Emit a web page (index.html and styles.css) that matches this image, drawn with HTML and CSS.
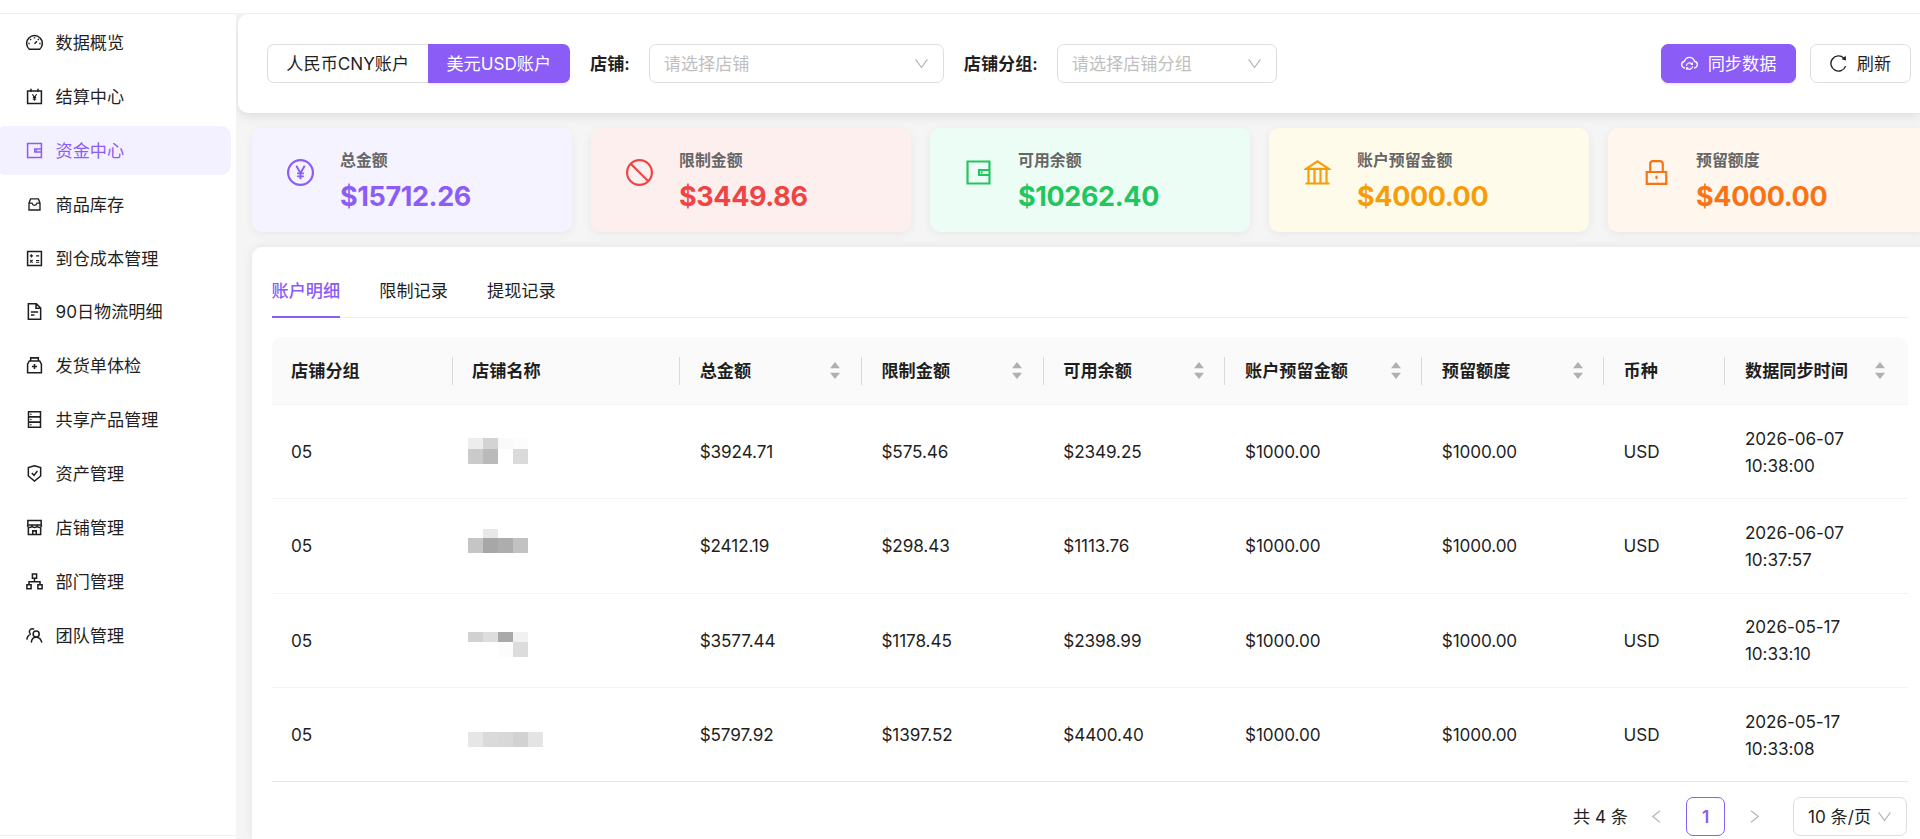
FILE: index.html
```html
<!DOCTYPE html>
<html lang="zh-CN">
<head>
  <meta charset="UTF-8">
  <meta name="viewport" content="width=device-width, initial-scale=1.0">
  <title>资金中心</title>
  <link rel="stylesheet" href="styles.css">
</head>
<body>
  <!-- 图标 -->
  <svg class="icon-defs" width="0" height="0">
    <symbol id="i-dashboard" viewBox="64 64 896 896">
      <path d="M238 868A412 412 0 1 1 786 868Z"/>
      <path d="M512 230v70M190 560h70M764 560h70M284 332l48 48M740 332l-48 48M512 580l130-130"/>
    </symbol>
    <symbol id="i-account" viewBox="64 64 896 896">
      <path d="M148 220h728v656H148zM326 110v170M698 110v170"/>
      <path d="M404 390l108 180 108-180M512 560v170M424 570h176M424 655h176" stroke-width="60"/>
    </symbol>
    <symbol id="i-wallet" viewBox="64 64 896 896">
      <path d="M148 148h728v728H148zM876 428H528v168h348"/>
      <circle class="solid" cx="620" cy="512" r="38"/>
    </symbol>
    <symbol id="i-inbox" viewBox="64 64 896 896">
      <path d="M184 840V420l96-240h464l96 240v420zM184 430h176q40 130 152 130t152-130h176"/>
    </symbol>
    <symbol id="i-calc" viewBox="64 64 896 896">
      <path d="M148 148h728v728H148z"/>
      <path d="M266 370h170M351 285v170M590 370h170M285 590l130 140M415 590L285 730M590 615h170M590 710h170" stroke-width="60"/>
    </symbol>
    <symbol id="i-file" viewBox="64 64 896 896">
      <path d="M188 100h420l228 228v596H188zM590 110v236h236M320 540h384M320 700h190"/>
    </symbol>
    <symbol id="i-medicine" viewBox="64 64 896 896">
      <path d="M310 260V110h404v150M148 890V440l90-170h548l90 170v450zM512 430v270M377 565h270"/>
    </symbol>
    <symbol id="i-database" viewBox="64 64 896 896">
      <path d="M196 100h632v824H196zM196 374h632M196 650h632"/>
      <circle class="solid" cx="320" cy="237" r="40"/>
      <circle class="solid" cx="320" cy="512" r="40"/>
      <circle class="solid" cx="320" cy="787" r="40"/>
    </symbol>
    <symbol id="i-safety" viewBox="64 64 896 896">
      <path d="M512 102l324 100v440L512 910 188 642V202zM370 490l115 120 180-230"/>
    </symbol>
    <symbol id="i-shop" viewBox="64 64 896 896">
      <path d="M160 148h704v230H160zM188 520v356h648V520M420 876V690h184v186"/>
      <path d="M148 378v60q20 80 110 80t120-80q30 80 134 80t134-80q30 80 120 80t110-80v-60"/>
    </symbol>
    <symbol id="i-apartment" viewBox="64 64 896 896">
      <path d="M402 120h220v220H402zM112 688h220v200H112zM692 688h220v200H692zM512 340v180M222 688V520h580v168"/>
    </symbol>
    <symbol id="i-team" viewBox="64 64 896 896">
      <circle cx="600" cy="430" r="160"/>
      <path d="M342 890q20-290 258-290t298 290M490 190a150 150 0 1 0-190 240M110 730q10-210 210-290"/>
    </symbol>
    <symbol id="i-pay" viewBox="64 64 896 896">
      <circle cx="512" cy="512" r="412"/>
      <path d="M372 290l140 240 140-240M512 520v220M400 540h224M400 640h224" stroke-width="62"/>
    </symbol>
    <symbol id="i-stop" viewBox="64 64 896 896">
      <circle cx="512" cy="512" r="412"/>
      <path d="M221 221l582 582"/>
    </symbol>
    <symbol id="i-bank" viewBox="64 64 896 896">
      <path d="M130 394L512 140l382 254zM212 394v450M412 394v450M612 394v450M812 394v450M112 876h800"/>
    </symbol>
    <symbol id="i-lock" viewBox="64 64 896 896">
      <path d="M188 496h648v392H188zM304 496V220q0-88 88-88h240q88 0 88 88v276M512 620v110"/>
    </symbol>
    <symbol id="i-cloud" viewBox="64 64 896 896">
      <path d="M280 756C170 740 100 660 100 570c0-90 62-160 146-178C290 270 390 190 512 190s222 80 266 202c84 18 146 88 146 178 0 90-70 170-180 186"/>
      <path d="M350 640a166 166 0 0 1 300-90M674 660a166 166 0 0 1-300 90M665 460v100h-90M359 840V740h90" stroke-width="62"/>
    </symbol>
    <symbol id="i-reload" viewBox="64 64 896 896">
      <path d="M795 229A400 400 0 1 0 888 650"/>
      <path class="solid" d="M890 110l20 240-236-60z"/>
    </symbol>
    <symbol id="i-down" viewBox="64 64 896 896"><path d="M160 270l352 480 352-480"/></symbol>
    <symbol id="i-left" viewBox="64 64 896 896"><path d="M720 170L290 512l430 342"/></symbol>
    <symbol id="i-right" viewBox="64 64 896 896"><path d="M304 170l430 342-430 342"/></symbol>
    <symbol id="i-sort" viewBox="0 0 10 17"><path class="solid" d="M5 0l5 6.3H0zM5 17l5-6.3H0z"/></symbol>
  </svg>

  <header class="topbar"></header>

  <div class="layout">
    <aside class="sidebar">
      <nav class="menu">
        <a class="menu-item"><svg class="icon"><use href="#i-dashboard"/></svg>数据概览</a>
        <a class="menu-item"><svg class="icon"><use href="#i-account"/></svg>结算中心</a>
        <a class="menu-item active"><svg class="icon"><use href="#i-wallet"/></svg>资金中心</a>
        <a class="menu-item"><svg class="icon icon-small"><use href="#i-inbox"/></svg>商品库存</a>
        <a class="menu-item"><svg class="icon"><use href="#i-calc"/></svg>到仓成本管理</a>
        <a class="menu-item"><svg class="icon"><use href="#i-file"/></svg>90日物流明细</a>
        <a class="menu-item"><svg class="icon"><use href="#i-medicine"/></svg>发货单体检</a>
        <a class="menu-item"><svg class="icon"><use href="#i-database"/></svg>共享产品管理</a>
        <a class="menu-item"><svg class="icon"><use href="#i-safety"/></svg>资产管理</a>
        <a class="menu-item"><svg class="icon"><use href="#i-shop"/></svg>店铺管理</a>
        <a class="menu-item"><svg class="icon"><use href="#i-apartment"/></svg>部门管理</a>
        <a class="menu-item"><svg class="icon"><use href="#i-team"/></svg>团队管理</a>
      </nav>
      <div class="sidebar-footer"></div>
    </aside>

    <main class="main">
      <section class="toolbar">
        <div class="account-switch">
          <button class="switch-btn">人民币CNY账户</button>
          <button class="switch-btn selected">美元USD账户</button>
        </div>
        <span class="field-label">店铺:</span>
        <div class="select select-shop"><span>请选择店铺</span><svg class="arrow"><use href="#i-down"/></svg></div>
        <span class="field-label">店铺分组:</span>
        <div class="select select-group"><span>请选择店铺分组</span><svg class="arrow"><use href="#i-down"/></svg></div>
        <div class="actions">
          <button class="btn btn-primary"><svg class="icon"><use href="#i-cloud"/></svg>同步数据</button>
          <button class="btn"><svg class="icon"><use href="#i-reload"/></svg>刷新</button>
        </div>
      </section>

      <section class="stats">
        <div class="stat purple">
          <svg class="stat-icon"><use href="#i-pay"/></svg>
          <div><div class="stat-title">总金额</div><div class="stat-value">$15712.26</div></div>
        </div>
        <div class="stat red">
          <svg class="stat-icon"><use href="#i-stop"/></svg>
          <div><div class="stat-title">限制金额</div><div class="stat-value">$3449.86</div></div>
        </div>
        <div class="stat green">
          <svg class="stat-icon"><use href="#i-wallet"/></svg>
          <div><div class="stat-title">可用余额</div><div class="stat-value">$10262.40</div></div>
        </div>
        <div class="stat yellow">
          <svg class="stat-icon"><use href="#i-bank"/></svg>
          <div><div class="stat-title">账户预留金额</div><div class="stat-value">$4000.00</div></div>
        </div>
        <div class="stat orange">
          <svg class="stat-icon"><use href="#i-lock"/></svg>
          <div><div class="stat-title">预留额度</div><div class="stat-value">$4000.00</div></div>
        </div>
      </section>

      <section class="panel">
        <div class="tabs">
          <div class="tab active">账户明细</div>
          <div class="tab">限制记录</div>
          <div class="tab">提现记录</div>
        </div>

        <table class="table">
          <colgroup>
            <col class="col-group"><col class="col-name"><col class="col-money"><col class="col-money"><col class="col-money">
            <col class="col-reserve"><col class="col-money"><col class="col-currency"><col class="col-time">
          </colgroup>
          <thead>
            <tr>
              <th><div class="th">店铺分组</div></th>
              <th><div class="th">店铺名称</div></th>
              <th><div class="th">总金额<svg class="sort"><use href="#i-sort"/></svg></div></th>
              <th><div class="th">限制金额<svg class="sort"><use href="#i-sort"/></svg></div></th>
              <th><div class="th">可用余额<svg class="sort"><use href="#i-sort"/></svg></div></th>
              <th><div class="th">账户预留金额<svg class="sort"><use href="#i-sort"/></svg></div></th>
              <th><div class="th">预留额度<svg class="sort"><use href="#i-sort"/></svg></div></th>
              <th><div class="th">币种</div></th>
              <th><div class="th">数据同步时间<svg class="sort"><use href="#i-sort"/></svg></div></th>
            </tr>
          </thead>
          <tbody>
            <tr>
              <td>05</td>
              <td>
                <svg class="mosaic" width="75" height="40" shape-rendering="crispEdges">
                  <rect x="0" y="6" width="15" height="11" fill="#ededed"/><rect x="15" y="6" width="15" height="11" fill="#d3d3d3"/>
                  <rect x="30" y="6" width="15" height="11" fill="#fafafa"/><rect x="45" y="6" width="15" height="11" fill="#fcfcfc"/>
                  <rect x="0" y="17" width="15" height="15" fill="#cacaca"/><rect x="15" y="17" width="15" height="15" fill="#bababa"/>
                  <rect x="45" y="17" width="15" height="15" fill="#dadada"/>
                </svg>
              </td>
              <td>$3924.71</td><td>$575.46</td><td>$2349.25</td><td>$1000.00</td><td>$1000.00</td><td>USD</td>
              <td>2026-06-07<br>10:38:00</td>
            </tr>
            <tr>
              <td>05</td>
              <td>
                <svg class="mosaic" width="75" height="40" shape-rendering="crispEdges">
                  <rect x="15" y="3" width="15" height="9" fill="#e8e8e8"/>
                  <rect x="0" y="12" width="15" height="15" fill="#c5c5c5"/><rect x="15" y="12" width="15" height="15" fill="#a7a7a7"/>
                  <rect x="30" y="12" width="15" height="15" fill="#adadad"/><rect x="45" y="12" width="15" height="15" fill="#c2c2c2"/>
                </svg>
              </td>
              <td>$2412.19</td><td>$298.43</td><td>$1113.76</td><td>$1000.00</td><td>$1000.00</td><td>USD</td>
              <td>2026-06-07<br>10:37:57</td>
            </tr>
            <tr>
              <td>05</td>
              <td>
                <svg class="mosaic" width="75" height="40" shape-rendering="crispEdges">
                  <rect x="0" y="12" width="15" height="10" fill="#d1d1d1"/><rect x="15" y="12" width="15" height="10" fill="#dddedc"/>
                  <rect x="30" y="12" width="15" height="10" fill="#a9a9a9"/><rect x="45" y="12" width="15" height="10" fill="#f1f1f1"/>
                  <rect x="30" y="22" width="15" height="15" fill="#fcfcfc"/><rect x="45" y="22" width="15" height="15" fill="#dcdcdc"/>
                </svg>
              </td>
              <td>$3577.44</td><td>$1178.45</td><td>$2398.99</td><td>$1000.00</td><td>$1000.00</td><td>USD</td>
              <td>2026-05-17<br>10:33:10</td>
            </tr>
            <tr>
              <td>05</td>
              <td>
                <svg class="mosaic" width="75" height="40" shape-rendering="crispEdges">
                  <rect x="0" y="17" width="15" height="15" fill="#e6e6e6"/><rect x="15" y="17" width="15" height="15" fill="#dadada"/>
                  <rect x="30" y="17" width="15" height="15" fill="#d8d8d8"/><rect x="45" y="17" width="15" height="15" fill="#d2d2d2"/>
                  <rect x="60" y="17" width="15" height="15" fill="#e4e4e4"/>
                </svg>
              </td>
              <td>$5797.92</td><td>$1397.52</td><td>$4400.40</td><td>$1000.00</td><td>$1000.00</td><td>USD</td>
              <td>2026-05-17<br>10:33:08</td>
            </tr>
          </tbody>
        </table>

        <div class="pagination">
          <span class="total">共 4 条</span>
          <span class="page-nav"><svg class="nav-icon"><use href="#i-left"/></svg></span>
          <span class="page current">1</span>
          <span class="page-nav"><svg class="nav-icon"><use href="#i-right"/></svg></span>
          <div class="select page-size"><span>10 条/页</span><svg class="arrow"><use href="#i-down"/></svg></div>
        </div>
      </section>
    </main>
  </div>
</body>
</html>
```
FILE: styles.css
```css
* {
  margin: 0;
  padding: 0;
  box-sizing: border-box;
}

body {
  font-family: Inter, 'Noto Sans CJK SC', sans-serif;
  font-size: 17.15px;
  line-height: 27px;
  color: #1f1f1f;
  background: #fff;
  height: 100vh;
  overflow: hidden;
  display: flex;
  flex-direction: column;
}

button {
  font: inherit;
  color: inherit;
  background: #fff;
}

svg {
  fill: none;
  stroke: currentColor;
  stroke-width: 72;
  flex: none;
}

.solid {
  fill: currentColor;
  stroke: none;
}

.icon-defs {
  position: absolute;
}

.icon {
  width: 17px;
  height: 17px;
}

.topbar {
  height: 14px;
  border-bottom: 1px solid #f0f0f0;
  flex: none;
}

.layout {
  flex: 1;
  display: flex;
  min-height: 0;
}

/* 侧边栏 */
.sidebar {
  width: 236px;
  flex: none;
  display: flex;
  flex-direction: column;
  overflow: hidden;
}

.menu {
  flex: 1;
  padding: 4px 5px 0 0;
  margin-left: -4px;
  display: flex;
  flex-direction: column;
  gap: 4.9px;
}

.menu-item {
  height: 49px;
  flex: none;
  display: flex;
  align-items: center;
  gap: 12.5px;
  padding-left: 30px;
  border-radius: 10px;
}

.menu-item .icon {
  stroke-width: 80;
}

.menu-item.active {
  background: #f3f0ff;
  color: #8b5cf6;
}

.icon-small {
  width: 15px;
  height: 15px;
  margin: 0 1px;
}

.sidebar-footer {
  height: 4px;
  border-top: 1px solid #f0f0f0;
}

/* 主区域 */
.main {
  flex: 1;
  min-width: 0;
  background: #f5f5f5;
  overflow: hidden;
  display: flex;
  flex-direction: column;
}

.toolbar {
  height: 99px;
  flex: none;
  margin-left: 1.5px;
  padding: 0 9px 0 29.5px;
  display: flex;
  align-items: center;
  background: #fff;
  border-radius: 10px 0 0 10px;
  box-shadow: 0 3px 12px rgba(0, 0, 0, 0.1);
}

.account-switch {
  display: flex;
}

.switch-btn {
  width: 160.5px;
  height: 39px;
  border: 1px solid #dedede;
  border-right: 0;
  border-radius: 7px 0 0 7px;
}

.switch-btn.selected {
  width: 142.5px;
  border: 0;
  border-radius: 0 7px 7px 0;
  background: #8b5cf6;
  color: #fff;
  box-shadow: 0 2px 2px rgba(139, 92, 246, 0.12);
}

.field-label {
  font-weight: 600;
  margin-left: 20px;
  margin-right: 19px;
}

.select {
  height: 39px;
  display: flex;
  align-items: center;
  justify-content: space-between;
  padding: 0 14px;
  border: 1px solid #dedede;
  border-radius: 7px;
  color: #bfbfbf;
}

.select-shop {
  width: 295px;
}

.select-group {
  width: 220.5px;
}

.arrow {
  width: 15px;
  height: 15px;
  color: #b5b5b5;
}

.actions {
  margin-left: auto;
  display: flex;
  gap: 14px;
}

.btn {
  height: 39px;
  width: 101px;
  display: flex;
  align-items: center;
  justify-content: center;
  gap: 10px;
  border: 1px solid #dedede;
  border-radius: 7px;
}

.btn-primary {
  width: 135px;
  background: #8b5cf6;
  border-color: #8b5cf6;
  color: #fff;
  box-shadow: 0 2px 2px rgba(139, 92, 246, 0.12);
}

/* 统计卡片 */
.stats {
  display: flex;
  gap: 19.5px;
  padding: 15px 0 0 16px;
  flex: none;
}

.stat {
  width: 319.5px;
  height: 104px;
  flex: none;
  display: flex;
  gap: 26px;
  padding: 20px 35px;
  border-radius: 10px;
  box-shadow: 0 2px 10px rgba(0, 0, 0, 0.06);
}

.stat-icon {
  width: 27px;
  height: 27px;
  margin-top: 11px;
}

.stat-title {
  font-size: 15.9px;
  line-height: 26px;
  font-weight: 600;
  color: #666;
}

.stat-value {
  font-size: 27px;
  line-height: 34px;
  font-weight: 700;
  letter-spacing: -0.4px;
  margin-top: 6px;
}

.purple { background: #f5f3ff; color: #8b5cf6; }
.red { background: #feefef; color: #ef4444; }
.green { background: #ecfdf5; color: #22c55e; }
.yellow { background: #fffbeb; color: #f59e0b; }
.orange { background: #fff7ed; color: #f97316; }

/* 明细 */
.panel {
  flex: 1;
  margin: 15px -10px 0 16px;
  padding: 14px 22.5px 0 19.5px;
  background: #fff;
  border-radius: 10px 10px 0 0;
  box-shadow: 0 0 12px rgba(0, 0, 0, 0.08);
}

.tabs {
  display: flex;
  gap: 39.2px;
  height: 57px;
  border-bottom: 1px solid #f0f0f0;
}

.tab {
  height: 57px;
  line-height: 59px;
}

.tab.active {
  color: #8b5cf6;
  font-weight: 500;
  border-bottom: 2px solid #8b5cf6;
}

.table {
  width: 1636px;
  margin-top: 19px;
  table-layout: fixed;
  border-collapse: separate;
  border-spacing: 0;
}

.col-group { width: 181px; }
.col-name { width: 227.5px; }
.col-money { width: 181.8px; }
.col-reserve { width: 196.7px; }
.col-currency { width: 121.4px; }
.col-time { width: 182px; }

.table th {
  height: 68px;
  background: #fafafa;
  border-bottom: 1px solid #f3f3f3;
  text-align: left;
  font-weight: 600;
}

.table th:first-child {
  border-top-left-radius: 10px;
}

.table th:last-child {
  border-top-right-radius: 10px;
}

.th {
  height: 28px;
  display: flex;
  align-items: center;
  justify-content: space-between;
  padding: 0 20.5px 0 19.6px;
  border-right: 1px solid #d9d9d9;
}

.table th:last-child .th {
  border-right: 0;
  padding-right: 22.5px;
}

.sort {
  width: 10px;
  height: 17px;
  color: #b0b0b0;
}

.table td {
  height: 94.3px;
  padding: 0 19.6px;
  border-bottom: 1px solid #f3f3f3;
  letter-spacing: -0.1px;
}

.table tr:last-child td {
  border-bottom-color: #e6e6e6;
}

.mosaic {
  display: block;
  margin-left: -4.6px;
  stroke: none;
}

.pagination {
  display: flex;
  align-items: center;
  justify-content: flex-end;
  margin-top: 15px;
  padding-right: 0.5px;
}

.total {
  margin-right: 9px;
}

.page-nav {
  width: 39px;
  display: flex;
  justify-content: center;
  color: #b5b5b5;
}

.nav-icon {
  width: 15px;
  height: 15px;
}

.page {
  width: 39px;
  height: 39px;
  line-height: 37px;
  margin: 0 10px;
  text-align: center;
  border: 1px solid #8b5cf6;
  border-radius: 7px;
  color: #8b5cf6;
  font-weight: 600;
}

.page-size {
  width: 114px;
  margin-left: 19px;
  color: #1f1f1f;
}
```
